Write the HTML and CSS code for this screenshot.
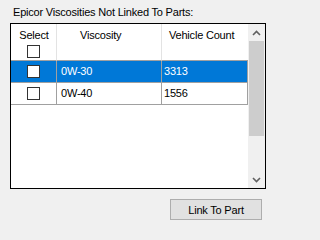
FILE: index.html
```html
<!DOCTYPE html>
<html>
<head>
<meta charset="utf-8">
<link rel="stylesheet" href="styles.css">
</head>
<body>
<div class="panel">
  <div class="caption">Epicor Viscosities Not Linked To Parts:</div>
  <div class="gridbox">
    <div class="grid">
      <div class="hcell hsel">
        <span>Select</span>
        <span class="cb"></span>
      </div>
      <div class="hcell hvis"><span>Viscosity</span></div>
      <div class="hcell hcnt"><span>Vehicle Count</span></div>

      <div class="cell csel selected"><span class="cb"></span></div>
      <div class="cell cvis selected">0W-30</div>
      <div class="cell ccnt selected">3313</div>

      <div class="cell csel"><span class="cb"></span></div>
      <div class="cell cvis">0W-40</div>
      <div class="cell ccnt">1556</div>
    </div>
    <div class="scrollbar">
      <div class="arrow">
        <svg width="9" height="6" viewBox="0 0 9 6"><polyline points="1,5 4.5,1.5 8,5" fill="none" stroke="#606060" stroke-width="1.6"/></svg>
      </div>
      <div class="track">
        <div class="thumb"></div>
      </div>
      <div class="arrow">
        <svg width="9" height="6" viewBox="0 0 9 6"><polyline points="1,1 4.5,4.5 8,1" fill="none" stroke="#606060" stroke-width="1.6"/></svg>
      </div>
    </div>
  </div>
  <div class="actions">
    <button class="btn">Link To Part</button>
  </div>
</div>
</body>
</html>
```
FILE: styles.css
```css
html, body {
  margin: 0;
  padding: 0;
  background: #f0f0f0;
  font-family: "Liberation Sans", Arial, sans-serif;
  font-size: 11px;
  letter-spacing: -0.2px;
  color: #000;
}

.panel {
  width: 277px;
  height: 232px;
  padding-top: 6px;
  box-sizing: border-box;
}

.caption {
  padding-left: 13px;
  height: 17px;
  line-height: 13px;
}

.gridbox {
  margin-left: 10px;
  width: 256px;
  height: 166px;
  box-sizing: border-box;
  border: 1px solid #000;
  background: #fff;
  display: flex;
}

.grid {
  width: 237px;
  display: grid;
  grid-template-columns: 46px 105px 86px;
  grid-template-rows: 37px 22px 22px;
  align-content: start;
}

.hcell {
  box-sizing: border-box;
  border-right: 1px solid #e3e3e3;
  border-bottom: 1px solid #a0a0a0;
  background: #fff;
  padding-top: 5px;
  line-height: 13px;
}

.hsel {
  display: flex;
  flex-direction: column;
  align-items: center;
  padding-left: 1px;
}

.hsel .cb {
  margin-top: 3px;
  margin-left: -1px;
}

.hvis {
  padding-left: 23px;
}

.hcnt {
  padding-left: 7px;
  border-right: none;
}

.cell {
  box-sizing: border-box;
  border-right: 1px solid #a0a0a0;
  border-bottom: 1px solid #a0a0a0;
  display: flex;
  align-items: center;
  line-height: 13px;
}

.cvis {
  padding-left: 4px;
}

.ccnt {
  padding-left: 2px;
}

.csel {
  justify-content: center;
}

.cell.selected {
  background: #0078d7;
  color: #fff;
}

.cb {
  display: block;
  width: 13px;
  height: 13px;
  box-sizing: border-box;
  border: 1px solid #333;
  background: #fff;
}

.scrollbar {
  width: 17px;
  background: #f0f0f0;
  display: flex;
  flex-direction: column;
}

.arrow {
  height: 17px;
  display: flex;
  align-items: center;
  justify-content: center;
}

.track {
  flex: 1;
  padding: 0 1px;
}

.thumb {
  height: 95px;
  background: #cdcdcd;
}

.actions {
  display: flex;
  justify-content: flex-end;
  padding-right: 15px;
  padding-top: 10px;
}

.btn {
  width: 92px;
  height: 21px;
  box-sizing: border-box;
  border: 1px solid #adadad;
  background: #e1e1e1;
  font-family: "Liberation Sans", Arial, sans-serif;
  font-size: 11px;
  letter-spacing: -0.2px;
  color: #000;
  padding: 0;
  border-radius: 0;
}
```
